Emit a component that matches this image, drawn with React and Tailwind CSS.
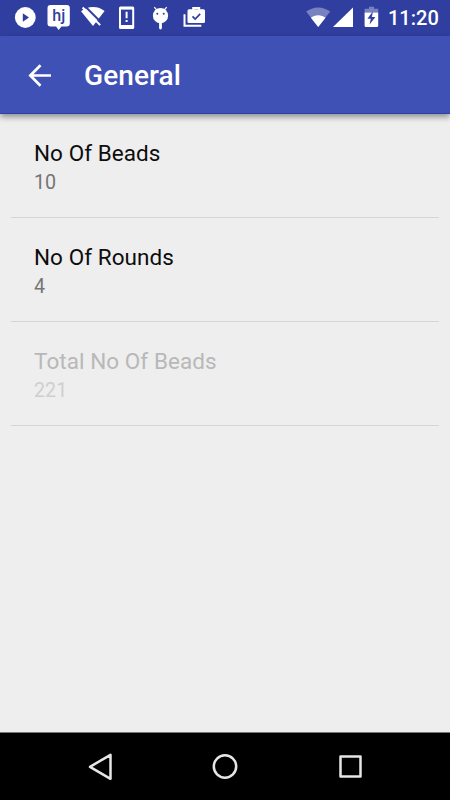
const preferences = [
  { title: 'No Of Beads', value: '10' },
  { title: 'No Of Rounds', value: '4' },
  { title: 'Total No Of Beads', value: '221', disabled: true },
]

function NotificationIcons() {
  return (
    <svg className="h-[36px] w-[210px]" viewBox="0 0 210 36" fill="#fff">
      {/* play */}
      <circle cx="25.3" cy="17.5" r="10.4" />
      <path d="M22.8 13.2v8.6l6.2-4.3z" fill="#303f9f" />

      {/* chat bubble */}
      <path d="M50.5 5h16.3a3 3 0 0 1 3 3v15.6a3 3 0 0 1-3 3h-5.4L58.7 30l-2.6-3.4h-5.6a3 3 0 0 1-3-3V8a3 3 0 0 1 3-3z" />
      <text
        x="58.8"
        y="20.8"
        textAnchor="middle"
        fontFamily="Roboto, sans-serif"
        fontSize="16"
        fontWeight="500"
        fill="#303f9f"
      >
        hj
      </text>

      {/* wifi off */}
      <path d="M81 11.2C84.2 8.7 88.3 7 93 7s8.600 1.600 11.600 4.100L93 26z" />
      <path d="M83.500 4.800l20 20" stroke="#303f9f" strokeWidth="2" />
      <path d="M82.600 7.500l17.600 17.600" stroke="#fff" strokeWidth="2" />

      {/* phone alert */}
      <rect x="119" y="6.5" width="15.2" height="22.5" rx="1.5" />
      <rect x="121" y="9.6" width="11.2" height="15.4" fill="#303f9f" />
      <path d="M125.6 11.800h2v6.500h-2zM125.6 20h2v2h-2z" />

      {/* debugging */}
      <circle cx="160.5" cy="15.7" r="7.6" />
      <path d="M154.3 7.200l2.500 3M166.700 7.200l-2.500 3" stroke="#fff" strokeWidth="1.3" />
      <path d="M159.100 22h2.800v6a1.400 1.400 0 0 1-2.800 0z" />
      <circle cx="157.3" cy="13.7" r="1" fill="#303f9f" />
      <circle cx="163.7" cy="13.7" r="1" fill="#303f9f" />

      {/* shop */}
      <path d="M184.500 14.300v11.400h16.800" fill="none" stroke="#fff" strokeWidth="2" />
      <path d="M193.200 10.500V8h6v2.500" fill="none" stroke="#fff" strokeWidth="2" />
      <rect x="187.500" y="9.200" width="17.500" height="13.800" rx="1.5" />
      <path d="M192.500 16.300l2.700 2.800 5-5.200" fill="none" stroke="#303f9f" strokeWidth="1.7" />
    </svg>
  )
}

function SystemIcons() {
  return (
    <svg className="h-[36px] w-[80px]" viewBox="304 0 80 36" fill="#fff">
      <path d="M306.200 11.600C309.500 9 313.500 7.400 318.200 7.400s8.800 1.600 12 4.200L318.200 27z" fillOpacity="0.35" />
      <path d="M310.900 17.700c2-1.500 4.400-2.400 7.300-2.400s5.300.9 7.300 2.400L318.200 27z" />
      <path d="M353 7.500V27h-20z" />
      <path d="M369 6.800h5v2h4.200v3.700h-13.600V8.800h4.400z" fillOpacity="0.35" />
      <path d="M364.600 12.500h13.600v13.200a1.300 1.300 0 0 1-1.300 1.300h-11a1.300 1.300 0 0 1-1.300-1.300z" />
      <path d="M373 11.300l-5.600 7.400h3.400l-1.200 5.800 5.800-7.500h-3.600z" fill="#303f9f" />
    </svg>
  )
}

function StatusBar() {
  return (
    <div className="flex h-[36px] items-center bg-[#303f9f]">
      <NotificationIcons />
      <div className="ml-auto flex items-center pr-[11px]">
        <SystemIcons />
        <span className="ml-1 w-[51px] pt-px text-[20px] leading-[35px] font-medium whitespace-nowrap text-white">
          11:20
        </span>
      </div>
    </div>
  )
}

function Toolbar() {
  return (
    <header className="relative flex h-[78px] items-center border-b border-[#303fae] bg-[#3f51b5] shadow-[0_3px_6px_rgba(0,0,0,0.4)]">
      <svg
        className="ml-[27px] h-6 w-6"
        viewBox="0 0 24 24"
        fill="none"
        stroke="#fff"
        strokeWidth="2.7"
      >
        <path d="M24 12.500H3.500M13.500 2.300L3.300 12.500l10.200 10.200" />
      </svg>
      <h1 className="ml-[33px] pt-[2px] text-[28px] leading-8 font-medium tracking-[0.1px] text-white">General</h1>
    </header>
  )
}

function Preference({ title, value, disabled }) {
  return (
    <li className="flex h-[104px] flex-col border-b border-[#d5d5d5] pt-[25px] pl-[23px]">
      <span className={`text-[22.5px] leading-[28px] tracking-[0.06px] ${disabled ? 'text-[#b8b8b8]' : 'text-[#0d0d0d]'}`}>
        {title}
      </span>
      <span className={`text-[19.7px] leading-[32px] ${disabled ? 'text-[#cfcfcf]' : 'text-[#757575]'}`}>
        {value}
      </span>
    </li>
  )
}

function NavigationBar() {
  return (
    <nav className="flex h-[68px] items-center justify-center gap-[93px] border-t border-[#777] bg-black">
      <svg className="h-8 w-8" viewBox="0 0 32 32" fill="none" stroke="#e6e6e6" strokeWidth="2.5" strokeLinejoin="round">
        <path d="M26.500 3.800v24L6 15.800z" />
      </svg>
      <svg className="h-8 w-8" viewBox="0 0 32 32" fill="none" stroke="#e6e6e6" strokeWidth="2.5">
        <circle cx="16" cy="15.5" r="11.2" />
      </svg>
      <svg className="h-8 w-8" viewBox="0 0 32 32" fill="none" stroke="#e6e6e6" strokeWidth="2.5" strokeLinejoin="round">
        <rect x="6.500" y="5.500" width="20" height="20" />
      </svg>
    </nav>
  )
}

export default function App() {
  return (
    <div className="flex h-[800px] w-[450px] flex-col overflow-hidden bg-[#eeeeee] font-['Roboto',sans-serif]">
      <StatusBar />
      <Toolbar />
      <main className="flex-1 px-[11px]">
        <ul>
          {preferences.map((item) => (
            <Preference key={item.title} {...item} />
          ))}
        </ul>
      </main>
      <NavigationBar />
    </div>
  )
}
